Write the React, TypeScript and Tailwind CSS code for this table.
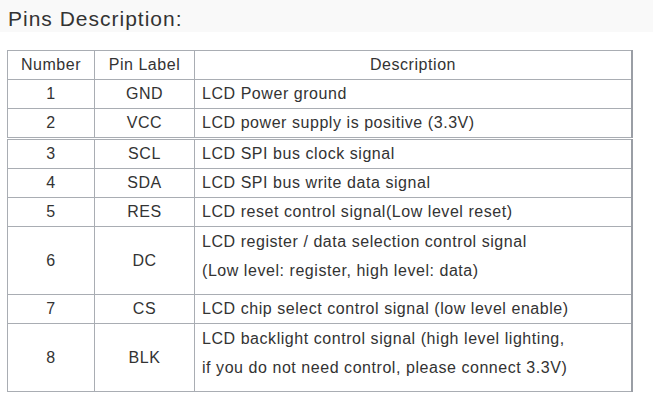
import React from 'react';

type Pin = { num: string; label: string; desc: string[] };

const topPins: Pin[] = [
  { num: '1', label: 'GND', desc: ['LCD Power ground'] },
  { num: '2', label: 'VCC', desc: ['LCD power supply is positive (3.3V)'] },
];

const bottomPins: Pin[] = [
  { num: '3', label: 'SCL', desc: ['LCD SPI bus clock signal'] },
  { num: '4', label: 'SDA', desc: ['LCD SPI bus write data signal'] },
  { num: '5', label: 'RES', desc: ['LCD reset control signal(Low level reset)'] },
  {
    num: '6',
    label: 'DC',
    desc: ['LCD register / data selection control signal', '(Low level: register, high level: data)'],
  },
  { num: '7', label: 'CS', desc: ['LCD chip select control signal (low level enable)'] },
  {
    num: '8',
    label: 'BLK',
    desc: ['LCD backlight control signal (high level lighting,', 'if you do not need control, please connect 3.3V)'],
  },
];

const cell = 'border border-[#a9adb3] p-0 align-middle';

const Row = ({ pin }: { pin: Pin }) => {
  const multi = pin.desc.length > 1;
  return (
    <tr className={multi ? 'h-[68px]' : 'h-[29px]'}>
      <td className={`${cell} text-center`}>{pin.num}</td>
      <td className={`${cell} text-center`}>{pin.label}</td>
      <td className={`${cell} border-r-2 border-r-[#9a9ea5] pl-[7px] text-left`}>
        {multi ? (
          <div className="flex flex-col pb-[9px]">
            {pin.desc.map((line) => (
              <div key={line} className="h-[29px] leading-[29px]">
                {line}
              </div>
            ))}
          </div>
        ) : (
          pin.desc[0]
        )}
      </td>
    </tr>
  );
};

const Cols = () => (
  <colgroup>
    <col className="w-[87px]" />
    <col className="w-[100px]" />
    <col />
  </colgroup>
);

export default function App() {
  return (
    <div className="min-h-[404px] w-[653px] bg-white text-[#333333] font-['Liberation_Sans',Arial,sans-serif]">
      <div className="h-[32px] bg-[#f9f9f9] pl-[8px] pt-[7px] text-[21px] leading-[23px] tracking-[1px]">
        Pins Description:
      </div>

      <div className="mt-[18px] ml-[7px] flex w-[626px] flex-col gap-[1px] text-[16px] leading-[28px] tracking-[0.55px]">
        <table className="w-full table-fixed border-collapse">
          <Cols />
          <tbody>
            <tr className="h-[29px]">
              <td className={`${cell} text-center`}>Number</td>
              <td className={`${cell} text-center`}>Pin Label</td>
              <td className={`${cell} border-r-2 border-r-[#9a9ea5] text-center`}>Description</td>
            </tr>
            {topPins.map((p) => (
              <Row key={p.num} pin={p} />
            ))}
          </tbody>
        </table>

        <table className="w-full table-fixed border-collapse">
          <Cols />
          <tbody>
            {bottomPins.map((p) => (
              <Row key={p.num} pin={p} />
            ))}
          </tbody>
        </table>
      </div>
    </div>
  );
}
